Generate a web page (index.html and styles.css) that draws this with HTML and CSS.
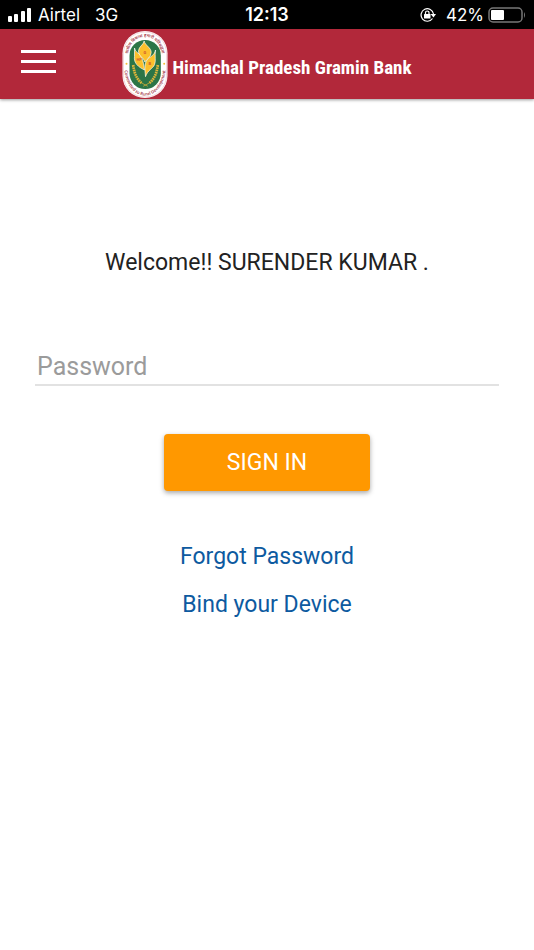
FILE: index.html
```html
<!DOCTYPE html>
<html lang="en">
<head>
    <meta charset="UTF-8">
    <meta name="viewport" content="width=device-width, initial-scale=1.0">
    <title>Himachal Pradesh Gramin Bank</title>
    <link rel="stylesheet" href="styles.css">
</head>
<body>
    <div class="status-bar">
        <div class="status-left">
            <svg class="signal" width="24" height="15" viewBox="0 0 24 15" fill="#fff">
                <rect x="0" y="9" width="4" height="6" rx="1"/>
                <rect x="6" y="7" width="4" height="8" rx="1"/>
                <rect x="13" y="4" width="4" height="11" rx="1"/>
                <rect x="19" y="1" width="4" height="14" rx="1"/>
            </svg>
            <span>Airtel</span>
            <span class="network">3G</span>
        </div>
        <span class="time">12:13</span>
        <div class="status-right">
            <svg width="16" height="16" viewBox="0 0 32 32" fill="none" stroke="#fff" stroke-width="2.4">
                <path d="M25 23A12.500 12.500 0 1 1 27 14"/>
                <path d="M21 14h11l-5 7z" fill="#fff" stroke="none"/>
                <rect x="8" y="14" width="13" height="9" rx="1" fill="#fff" stroke="none"/>
                <path d="M11 15v-3.500a3.500 3.500 0 0 1 7 0V15"/>
            </svg>
            <span class="percent">42%</span>
            <svg width="38" height="16" viewBox="0 0 38 16">
                <rect x="1" y="1" width="33" height="14" rx="4" fill="none" stroke="#777" stroke-width="1.500"/>
                <rect x="3" y="3" width="13" height="10" rx="1" fill="#fff"/>
                <path d="M36 5q2 3 0 6z" fill="#777"/>
            </svg>
        </div>
    </div>

    <header class="header">
        <button class="menu" type="button" aria-label="Menu">
            <span></span>
            <span></span>
            <span></span>
        </button>
        <div class="brand">
            <svg class="emblem" width="46" height="67" viewBox="0 0 135 201">
                <defs>
                    <path id="ring-top" d="M15 88C15 -6 120 -6 120 88"/>
                    <path id="ring-bottom" d="M5 108C10 222 125 222 130 108"/>
                </defs>
                <rect width="135" height="201" rx="67" fill="#fff"/>
                <rect x="3" y="3" width="129" height="195" rx="64" fill="none" stroke="#d98c94" stroke-width="1"/>
                <rect x="21" y="27" width="94" height="147" rx="47" fill="#2c7547"/>
                <text class="ring-text"><textPath href="#ring-top" startOffset="50%" text-anchor="middle">ग्रामीण विकास हमारी प्रतिबद्धता</textPath></text>
                <text class="ring-text"><textPath href="#ring-bottom" startOffset="50%" text-anchor="middle">Committed to Rural Development</textPath></text>
                <circle cx="12" cy="98" r="3" fill="#f4bd38"/>
                <circle cx="125" cy="98" r="3" fill="#f4bd38"/>
                <!-- wheat -->
                <g fill="none" stroke="#e0b53a" stroke-width="8" stroke-dasharray="5 2">
                    <path d="M32 102C35 126 42 143 57 156"/>
                    <path d="M106 102C103 126 96 143 81 156"/>
                </g>
                <g fill="none" stroke="#e0b53a" stroke-width="2">
                    <path d="M56 155l20 11M82 155l-20 11"/>
                </g>
                <!-- leaves -->
                <g fill="#fcc02c" stroke="#fff" stroke-width="2">
                    <path d="M36 51C38 66 52 65 57 79C63 91 64 106 66 117C48 108 33 97 36 76Z"/>
                    <path d="M65 30C67 43 87 50 86 65C85 79 73 84 67 93C64 80 48 75 48 60C49 46 62 43 65 30Z"/>
                    <path d="M99 57C96 77 101 89 96 101C91 113 76 116 69 137C67 113 64 94 78 82C87 75 96 72 99 57Z"/>
                </g>
                <g class="leaf-text">
                    <text x="67" y="69">G</text>
                    <text x="50" y="91">HP</text>
                    <text x="82" y="103">B</text>
                </g>
            </svg>
            <span class="bank-name">Himachal Pradesh Gramin Bank</span>
        </div>
    </header>

    <main class="login">
        <p class="welcome">Welcome!! SURENDER KUMAR .</p>
        <form class="login-form">
            <input class="password" type="password" name="password" placeholder="Password" aria-label="Password">
            <button class="sign-in" type="submit">SIGN IN</button>
        </form>
        <nav class="links">
            <a href="#">Forgot Password</a>
            <a href="#">Bind your Device</a>
        </nav>
    </main>
</body>
</html>
```
FILE: styles.css
```css
body{
    margin: 0;
    background-color: #fff;
    font-family: Roboto, sans-serif;
    font-size: 23px;
    color: #222;
}

/* status bar */
.status-bar{
    display: grid;
    grid-template-columns: 1fr auto 1fr;
    align-items: center;
    height: 29px;
    padding: 0 8px;
    background-color: #000;
    color: #fff;
    font-family: Inter, sans-serif;
    font-size: 17px;
}
.status-left,
.status-right{
    display: flex;
    align-items: center;
}
.status-right{
    justify-content: flex-end;
}
.signal{
    margin-right: 6px;
}
.network{
    margin-left: 15px;
}
.time{
    font-size: 18px;
    font-weight: 600;
}
.percent{
    margin: 0 4px 0 10px;
}

/* header */
.header{
    display: grid;
    grid-template-columns: 1fr auto 1fr;
    align-items: center;
    height: 70px;
    padding: 0 21px;
    background-color: #b2283a;
    box-shadow: 0 1px 3px rgba(0, 0, 0, 0.4);
}
.menu{
    display: flex;
    flex-direction: column;
    gap: 7px;
    width: 35px;
    margin-bottom: 6px;
    padding: 0;
    border: none;
    background: none;
    cursor: pointer;
}
.menu span{
    height: 3px;
    width: 100%;
    background-color: #fff;
}
.brand{
    display: flex;
    align-items: center;
    gap: 4px;
}
.bank-name{
    padding-top: 6px;
    color: #fff;
    font-family: "Roboto Condensed", "Liberation Sans Narrow", Roboto, sans-serif;
    font-size: 19px;
    font-weight: 700;
    white-space: nowrap;
}
.ring-text{
    fill: #a8404c;
    font-family: "Noto Sans", sans-serif;
    font-size: 13px;
    font-weight: 600;
}
.leaf-text{
    fill: #d0562c;
    font-size: 12px;
    font-weight: 700;
    text-anchor: middle;
}

/* login */
.login{
    padding: 149px 35px 0;
    text-align: center;
}
.welcome{
    margin: 0;
    line-height: 30px;
}
.login-form{
    display: flex;
    flex-direction: column;
    align-items: center;
    padding-top: 69px;
}
.password{
    box-sizing: border-box;
    width: 100%;
    height: 39px;
    padding: 2px 2px 0;
    border: none;
    border-bottom: 2px solid #e2e2e2;
    outline: none;
    font-family: inherit;
    font-size: 25px;
}
.password::placeholder{
    color: #9b9b9b;
}
.sign-in{
    width: 206px;
    height: 57px;
    margin-top: 48px;
    border: none;
    border-radius: 4px;
    background-color: #ff9800;
    box-shadow: 0 2px 5px rgba(0, 0, 0, 0.35);
    color: #fff;
    font-family: inherit;
    font-size: 23px;
    cursor: pointer;
}
.links{
    display: flex;
    flex-direction: column;
    align-items: center;
    gap: 18px;
    padding-top: 51px;
    line-height: 30px;
}
.links a{
    color: #0d5aa0;
    text-decoration: none;
}
```
